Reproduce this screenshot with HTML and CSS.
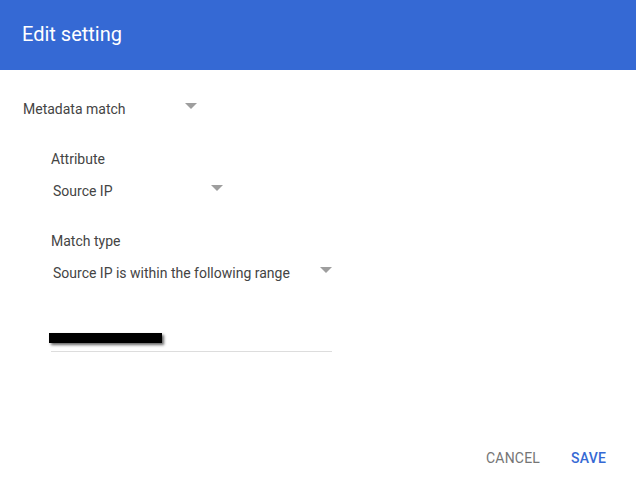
FILE: index.html
```html
<!DOCTYPE html>
<html>
<head>
<meta charset="utf-8">
<link rel="stylesheet" href="styles.css">
</head>
<body>
<div class="dialog">
  <header class="header"><h1 class="title">Edit setting</h1></header>
  <main class="content">
    <div class="select select-top">
      <span class="select-value">Metadata match</span>
      <span class="arrow"></span>
    </div>
    <div class="nested">
      <div class="field">
        <div class="label">Attribute</div>
        <div class="select select-attr">
          <span class="select-value">Source IP</span>
          <span class="arrow"></span>
        </div>
      </div>
      <div class="field">
        <div class="label">Match type</div>
        <div class="select select-match">
          <span class="select-value">Source IP is within the following range</span>
          <span class="arrow"></span>
        </div>
      </div>
      <div class="input">
        <span class="redacted"></span>
      </div>
    </div>
  </main>
  <footer class="actions">
    <button class="btn btn-cancel">CANCEL</button>
    <button class="btn btn-save">SAVE</button>
  </footer>
</div>
</body>
</html>
```
FILE: styles.css
```css
html, body {
  margin: 0;
  padding: 0;
  background: #fff;
}
body {
  font-family: Roboto, "Liberation Sans", Arial, sans-serif;
  width: 636px;
  height: 482px;
  overflow: hidden;
}
.dialog {
  display: flex;
  flex-direction: column;
  height: 482px;
}
.header {
  background: #3569d4;
  height: 70px;
  display: flex;
  align-items: center;
  padding-left: 22px;
  box-sizing: border-box;
}
.title {
  margin: 0;
  color: #fff;
  font-size: 20px;
  font-weight: 400;
  line-height: 24px;
  padding-bottom: 2px;
}
.content {
  flex: 1;
  display: flex;
  flex-direction: column;
  padding-top: 30px;
  padding-left: 23px;
}
.select {
  display: flex;
  align-items: center;
  justify-content: space-between;
  height: 18px;
  font-size: 14px;
  color: #444;
  box-sizing: border-box;
}
.select-value { line-height: 18px; }
.select-top { width: 175px; padding-right: 1px; }
.arrow {
  width: 0;
  height: 0;
  border-left: 6px solid transparent;
  border-right: 6px solid transparent;
  border-top: 6px solid #9e9e9e;
  margin-top: -7px;
}
.nested {
  padding-left: 28px;
  display: flex;
  flex-direction: column;
}
.field {
  display: flex;
  flex-direction: column;
}
.field:first-child { margin-top: 32px; }
.field + .field { margin-top: 32px; }
.label {
  font-size: 14px;
  line-height: 18px;
  color: #444;
}
.field .select { margin-top: 14px; padding-left: 2px; }
.select-attr { width: 172px; }
.select-match { width: 281px; }
.input {
  margin-top: 41px;
  width: 281px;
  height: 28px;
  border-bottom: 1px solid #ddd;
  position: relative;
}
.redacted {
  position: absolute;
  left: -2px;
  top: 10px;
  width: 113px;
  height: 10px;
  background: #000;
  box-shadow: 2px 2px 3px rgba(0,0,0,0.6);
}
.actions {
  display: flex;
  justify-content: flex-end;
  align-items: center;
  gap: 9px;
  padding: 0 19px 7px 0;
}
.btn {
  font-family: Roboto, "Liberation Sans", Arial, sans-serif;
  font-size: 14px;
  font-weight: 500;
  background: none;
  border: none;
  padding: 8px 11px;
  line-height: 18px;
  letter-spacing: 0.2px;
}
.btn-cancel { color: #757575; font-weight: 400; }
.btn-save { color: #3569d4; }
```
